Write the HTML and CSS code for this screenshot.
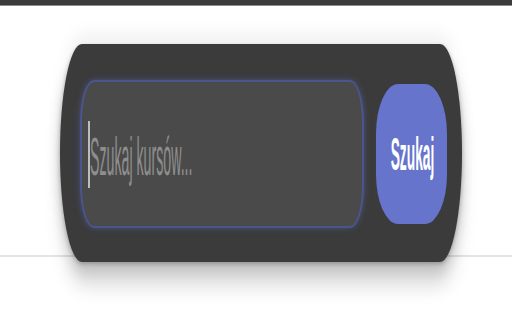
FILE: index.html
```html
<!DOCTYPE html>
<html lang="pl">
<head>
    <meta charset="UTF-8">
    <meta name="viewport" content="width=device-width, initial-scale=1.0">
    <title>Szukaj kursów</title>
    <link rel="stylesheet" href="styles.css">
</head>
<body>
    <div class="top-bar"></div>

    <div class="hero">
        <form class="search-box" onsubmit="return false;">
            <div class="search-input">
                <span class="caret"></span>
                <span class="placeholder">Szukaj kursów...</span>
            </div>
            <button class="search-btn" type="submit"><span>Szukaj</span></button>
        </form>
    </div>
    <div class="content"></div>
</body>
</html>
```

FILE: styles.css
```css
body {
    margin: 0;
    min-height: 320px;
    background: #ffffff;
    font-family: "Liberation Sans", Arial, sans-serif;
}
.top-bar {
    height: 5px;
    background: #3b3b3b;
    border-bottom: 1px solid #8c8c8c;
}
.hero {
    padding-top: 38px;
    border-bottom: 2px solid #e4e4e4;
}
.content {
    height: 63px;
}
.search-box {
    position: relative;
    z-index: 1;
    box-sizing: border-box;
    display: flex;
    align-items: center;
    gap: 12px;
    width: 402px;
    height: 218px;
    margin: 0 0 -7px 60px;
    padding: 36px 15px 34px 20px;
    background: #3b3b3b;
    border-radius: 22px / 109px;
    box-shadow: 0 26px 18px rgba(0, 0, 0, 0.12),
                0 12px 12px rgba(0, 0, 0, 0.12),
                0 -12px 16px rgba(0, 0, 0, 0.05),
                0 2px 4px rgba(0, 0, 0, 0.25);
}
.search-input {
    box-sizing: border-box;
    display: flex;
    align-items: center;
    width: 284px;
    height: 148px;
    padding-left: 6px;
    background: #4a4a4a;
    border: 2px solid #4a558e;
    border-radius: 14px / 42px;
    box-shadow: 0 0 6px rgba(90, 105, 190, 0.5);
}
.caret {
    width: 2px;
    height: 67px;
    background: #bdbdbd;
}
.placeholder {
    display: inline-block;
    font-size: 14.2px;
    color: #8e8e8e;
    transform: scaleY(3.8);
    transform-origin: left center;
    margin-top: 4px;
}
.search-btn {
    width: 71px;
    height: 140px;
    padding: 0;
    border: none;
    background: #6674cc;
    border-radius: 22px / 50px;
    color: #ffffff;
    font-family: "Liberation Sans", Arial, sans-serif;
    font-weight: bold;
    font-size: 13.8px;
    cursor: pointer;
}
.search-btn span {
    display: inline-block;
    transform: scaleY(3.4);
    margin-top: -4px;
    margin-left: 2px;
}
```
